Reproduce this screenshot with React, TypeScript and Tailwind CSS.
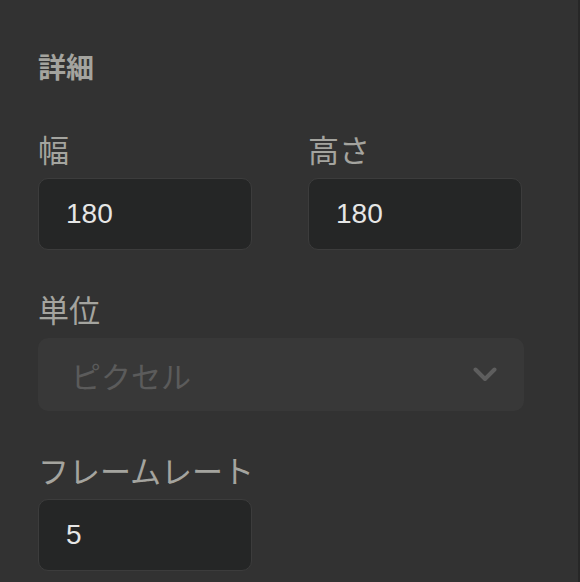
import React from "react";

const labelCls =
  "block whitespace-nowrap text-[31px] leading-[31px] text-[#a4a49f] font-['Noto_Sans_CJK_JP','Noto_Sans',sans-serif]";
const inputCls =
  "h-[72px] w-full flex items-center rounded-[10px] border border-[#3c3c3c] bg-[#252626] pl-[27px] text-[28px] text-[#e6e6e6] font-['Liberation_Sans',Arial,sans-serif]";

function Field({ label, value }: { label: string; value: string }) {
  return (
    <div className="flex flex-col">
      <span className={labelCls}>{label}</span>
      <div className={"mt-[14px] " + inputCls}>{value}</div>
    </div>
  );
}

export default function App() {
  return (
    <div className="relative w-[580px] h-[582px] overflow-hidden bg-[#323232]">
      <div className="absolute right-0 top-0 bottom-0 w-[2px] bg-[#272727]" />
      <div className="pl-[38px] pr-[56px] pt-[52px]">
        <h2 className="text-[28px] leading-[28px] font-bold text-[#a4a49f] font-['Noto_Sans_CJK_JP','Noto_Sans',sans-serif]">
          詳細
        </h2>
        <div className="mt-[53px] flex flex-col gap-[43px]">
          <div className="grid grid-cols-2 gap-[56px] pr-[2px]">
            <Field label="幅" value="180" />
            <Field label="高さ" value="180" />
          </div>
          <div className="flex flex-col">
            <span className={labelCls}>単位</span>
            <div className="mt-[14px] h-[73px] w-[486px] flex items-center justify-between rounded-[10px] bg-[#383838] pl-[33px] pr-[27px]">
              <span className="text-[30px] leading-[30px] text-[#5b5b5b] font-['Noto_Sans_CJK_JP','Noto_Sans',sans-serif]">
                ピクセル
              </span>
              <svg width="24" height="15" viewBox="0 0 24 15" fill="none">
                <path
                  d="M2.5 2.5 L12 12 L21.5 2.5"
                  stroke="#5e5e5e"
                  strokeWidth="4"
                  strokeLinecap="round"
                  strokeLinejoin="round"
                />
              </svg>
            </div>
          </div>
          <div className="w-[214px]">
            <Field label="フレームレート" value="5" />
          </div>
        </div>
      </div>
    </div>
  );
}
